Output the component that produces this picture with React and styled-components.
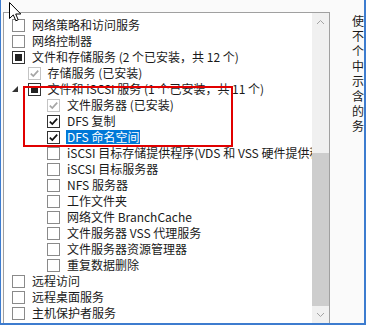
import React from 'react';
import styled, { createGlobalStyle } from 'styled-components';

const GlobalStyle = createGlobalStyle`
  html, body {
    margin: 0;
    padding: 0;
    background: #fafafa;
  }
`;

const Window = styled.div`
  position: relative;
  width: 366px;
  height: 325px;
  box-sizing: border-box;
  border-left: 1px solid #3d7ccf;
  border-right: 2px solid #3d7ccf;
  border-bottom: 2px solid #3d7ccf;
  background: #fafafa;
  overflow: hidden;
  display: flex;
  padding: 12px 0 0 2px;
  font-family: "Noto Sans CJK SC", "Noto Sans", sans-serif;
  font-size: 12px;
  color: #1a1a1a;
`;

const ListBox = styled.div`
  width: 327px;
  flex-shrink: 0;
  box-sizing: border-box;
  border: 1px solid #a0a0a0;
  border-bottom: none;
  background: #fff;
  display: flex;
`;

const Tree = styled.div`
  flex: 1;
  min-width: 0;
  overflow: hidden;
  padding-top: 4px;
`;

const Row = styled.div`
  display: flex;
  align-items: center;
  height: 16px;
  white-space: nowrap;
`;

const Indent = styled.div`
  width: ${p => 4 + p.$level * 19.5}px;
  flex-shrink: 0;
  display: flex;
  align-items: center;
  padding-left: 8px;
  box-sizing: border-box;
`;

const Box = styled.div`
  width: 13px;
  height: 13px;
  flex-shrink: 0;
  box-sizing: border-box;
  border: 1px solid ${p => (p.$locked ? '#c4c4c4' : p.$strong ? '#333' : '#8a8a8a')};
  background: #fff;
  display: flex;
  align-items: center;
  justify-content: center;
`;

const Square = styled.div`
  width: 7px;
  height: 7px;
  background: #222;
`;

const Label = styled.span`
  margin-left: ${p => (p.$selected ? 6 : 7)}px;
  padding: 0 ${p => (p.$selected ? 1 : 0)}px;
  line-height: 14px;
  background: ${p => (p.$selected ? '#0078d7' : 'transparent')};
  color: ${p => (p.$selected ? '#fff' : 'inherit')};
`;

const ScrollBar = styled.div`
  width: 17px;
  flex-shrink: 0;
  background: #f0f0f0;
  display: flex;
  flex-direction: column;
`;

const ScrollButton = styled.div`
  height: 17px;
  display: flex;
  align-items: center;
  justify-content: center;
`;

const Track = styled.div`
  flex: 1;
  display: flex;
  flex-direction: column;
`;

const Thumb = styled.div`
  margin-top: 123px;
  flex: 1;
  margin-left: 0;
  background: #cdcdcd;
`;

const SideText = styled.div`
  width: 12px;
  margin: 1px 0 0 22px;
  line-height: 15px;
  word-break: break-all;
  overflow: hidden;
  color: #1a1a1a;
`;

const Annotation = styled.div`
  position: absolute;
  left: 22px;
  top: 86px;
  width: 210px;
  height: 61px;
  box-sizing: border-box;
  border: 2px solid #e10000;
  pointer-events: none;
`;

const Cursor = styled.svg`
  position: absolute;
  left: 8px;
  top: 2px;
`;

const items = [
  { label: '网络策略和访问服务', level: 0 },
  { label: '网络控制器', level: 0 },
  { label: '文件和存储服务 (2 个已安装，共 12 个)', level: 0, state: 'partial' },
  { label: '存储服务 (已安装)', level: 1, state: 'locked' },
  { label: '文件和 iSCSI 服务 (1 个已安装，共 11 个)', level: 1, state: 'partial', expanded: true },
  { label: '文件服务器 (已安装)', level: 2, state: 'locked' },
  { label: 'DFS 复制', level: 2, state: 'on' },
  { label: 'DFS 命名空间', level: 2, state: 'on', selected: true },
  { label: 'iSCSI 目标存储提供程序(VDS 和 VSS 硬件提供程序)', level: 2 },
  { label: 'iSCSI 目标服务器', level: 2 },
  { label: 'NFS 服务器', level: 2 },
  { label: '工作文件夹', level: 2 },
  { label: '网络文件 BranchCache', level: 2 },
  { label: '文件服务器 VSS 代理服务', level: 2 },
  { label: '文件服务器资源管理器', level: 2 },
  { label: '重复数据删除', level: 2 },
  { label: '远程访问', level: 0 },
  { label: '远程桌面服务', level: 0 },
  { label: '主机保护者服务', level: 0 },
];

const Tick = ({ color }) => (
  <svg width="11" height="11" viewBox="0 0 11 11">
    <path d="M1.8 5.6 L4.3 8.1 L9.2 2.6" fill="none" stroke={color} strokeWidth="1.7" />
  </svg>
);

const CheckBox = ({ state }) => {
  if (state === 'partial') return <Box $strong><Square /></Box>;
  if (state === 'locked') return <Box $locked><Tick color="#a6a6a6" /></Box>;
  if (state === 'on') return <Box $strong><Tick color="#111" /></Box>;
  return <Box />;
};

const Chevron = ({ up }) => (
  <svg width="9" height="6" viewBox="0 0 9 6">
    <path d={up ? 'M1 5 L4.5 1.5 L8 5' : 'M1 1 L4.5 4.5 L8 1'} fill="none" stroke="#a3a3a3" strokeWidth="1" />
  </svg>
);

export default function App() {
  return (
    <>
      <GlobalStyle />
      <Window>
        <ListBox>
          <Tree>
            {items.map((it, i) => (
              <Row key={i}>
                <Indent $level={it.level}>
                  {it.expanded && (
                    <svg width="6" height="6" viewBox="0 0 6 6">
                      <path d="M6 0 L6 6 L0 6 Z" fill="#333" />
                    </svg>
                  )}
                </Indent>
                <CheckBox state={it.state} />
                <Label $selected={it.selected}>{it.label}</Label>
              </Row>
            ))}
          </Tree>
          <ScrollBar>
            <ScrollButton><Chevron up /></ScrollButton>
            <Track><Thumb /></Track>
            <ScrollButton><Chevron /></ScrollButton>
          </ScrollBar>
        </ListBox>
        <SideText>使不个中示含的务</SideText>
        <Annotation />
        <Cursor width="13" height="21" viewBox="0 0 13 21">
          <path d="M0.5 0.5 L0.5 16.5 L4.3 12.9 L6.8 18.8 L9.2 17.8 L6.7 12 L11.8 12 Z" fill="#fff" stroke="#000" strokeWidth="1" strokeLinejoin="miter" />
        </Cursor>
      </Window>
    </>
  );
}
